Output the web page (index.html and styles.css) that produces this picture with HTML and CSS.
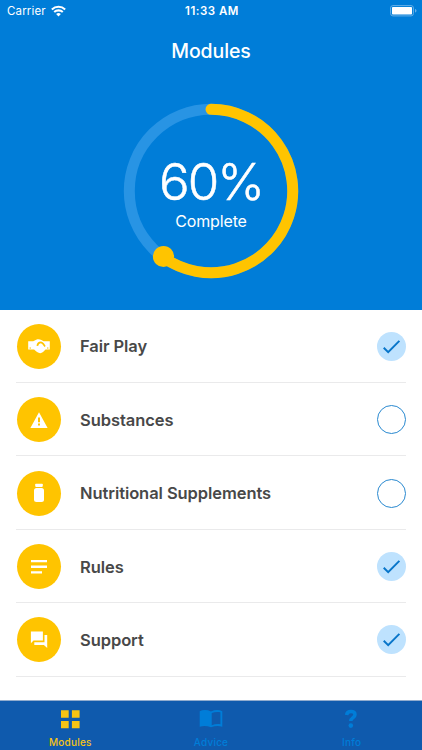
FILE: index.html
```
<!DOCTYPE html>
<html lang="en">

<head>
  <meta charset="UTF-8">
  <meta name="viewport" content="width=device-width, initial-scale=1.0">
  <title>Modules</title>
  <link rel="stylesheet" href="styles.css">
</head>

<body>

  <header>
    <div class="status-bar">
      <div class="carrier">
        <span>Carrier</span>
        <svg class="wifi" viewBox="0 0 14 11">
          <path d="M0.8 4.1a9 9 0 0 1 12.4 0M3 6.5a5.8 5.8 0 0 1 8 0" fill="none" stroke="#fff" stroke-width="1.9"/>
          <path d="M4.8 8.3a3.2 3.2 0 0 1 4.4 0L7 10.6z" fill="#fff"/>
        </svg>
      </div>
      <span class="time">11:33 AM</span>
      <svg class="battery" viewBox="0 0 27 12">
        <rect x="0.6" y="0.6" width="22.8" height="10.3" rx="2.3" fill="none" stroke="#66b0e8" stroke-width="1"/>
        <rect x="2" y="2" width="20" height="7.5" rx="0.8" fill="#fff"/>
        <path d="M25 4v3.6c1-.3 1.5-1 1.5-1.8S26 4.3 25 4z" fill="#66b0e8"/>
      </svg>
    </div>

    <h1>Modules</h1>

    <div class="progress">
      <svg viewBox="0 0 176 176">
        <circle class="track" cx="88" cy="88" r="81.7"/>
        <path class="value" d="M88 6.3a81.7 81.7 0 1 1-48 147.8"/>
        <circle class="knob" cx="40.5" cy="153.5" r="10.6"/>
      </svg>
      <div class="progress-text">
        <span class="percent">60%</span>
        <span class="label">Complete</span>
      </div>
    </div>
  </header>

  <ul class="modules">
    <li>
      <span class="icon">
        <svg viewBox="0 0 24 24">
          <path d="M1.2 7.200h5l3-1.500c1.800-.6 3.600-.4 5.200.3l2.200 1.200h6.200v8.400h-4.300c-1.500 1.500-3.300 3.600-5.200 3.700-1.900.1-4.500-2-6.200-3.700H1.200z"/>
          <path class="cut" d="M10.300 11.800c.4-2.200 1.800-3.500 3.500-3.500 2 0 2.700 1.700 4.200 4.200"/>
          <path class="cut thin" d="M3.200 13.300v1.500M20.800 13.300v1.500"/>
        </svg>
      </span>
      <span class="name">Fair Play</span>
      <span class="check done"><svg viewBox="0 0 28 28"><path d="M6.5 15.2l4.300 4.200L21.600 8.600"/></svg></span>
    </li>
    <li>
      <span class="icon">
        <svg viewBox="0 0 24 24"><path fill-rule="evenodd" d="M3.4 20h17.200L12 4.200zM11 9.500h2v4.700h-2zm0 6h2v2h-2z"/></svg>
      </span>
      <span class="name">Substances</span>
      <span class="check"></span>
    </li>
    <li>
      <span class="icon">
        <svg viewBox="0 0 24 24">
          <rect x="8.2" y="2.8" width="7.6" height="3.1" rx=".8"/>
          <rect x="7" y="6.9" width="10" height="14" rx="2.5"/>
        </svg>
      </span>
      <span class="name">Nutritional Supplements</span>
      <span class="check"></span>
    </li>
    <li>
      <span class="icon">
        <svg viewBox="0 0 24 24"><path d="M4 4.900h16v2.300H4zM4 10.600h16v2.300H4zM4 16.200h11v2.300H4z"/></svg>
      </span>
      <span class="name">Rules</span>
      <span class="check done"><svg viewBox="0 0 28 28"><path d="M6.5 15.2l4.300 4.200L21.600 8.600"/></svg></span>
    </li>
    <li>
      <span class="icon">
        <svg viewBox="0 0 24 24"><path d="M3.900 3.500h12v9H6.500l-2.600 2.800zM17.500 7h2.700v13l-3.300-3H7.300v-2.700h10.200z"/></svg>
      </span>
      <span class="name">Support</span>
      <span class="check done"><svg viewBox="0 0 28 28"><path d="M6.5 15.2l4.300 4.200L21.600 8.600"/></svg></span>
    </li>
  </ul>

  <nav>
    <a class="tab active">
      <svg viewBox="0 0 24 22"><path d="M3 2.300h7.700v7.400H3zM13.900 2.300h7.700v7.400h-7.700zM3 12.900h7.700v7.400H3zM13.900 12.900h7.700v7.400h-7.700z"/></svg>
      <span>Modules</span>
    </a>
    <a class="tab">
      <svg viewBox="0 0 24 22"><path fill-rule="evenodd" d="M.7 3.200C4 1.500 8 1.500 12 3.400c4-1.900 8-1.900 11.300-.2v15.500c-3.500-1.300-7.600-1-11.300.6-3.700-1.600-7.800-1.900-11.300-.6zM12.700 5v12.200c2.800-1.100 5.700-1.500 8.700-1V4.300c-3-.7-5.900-.4-8.700.7z"/></svg>
      <span>Advice</span>
    </a>
    <a class="tab">
      <svg viewBox="0 0 24 22"><path class="question" d="M6.600 7c.3-2.200 2-3.400 4.300-3.400 2.500 0 4.100 1.200 4.100 3.200 0 2.900-4.200 2.800-4.200 6.300"/><circle cx="10.8" cy="17.600" r="2.300"/></svg>
      <span>Info</span>
    </a>
  </nav>

</body>

</html>
```
FILE: styles.css
```
:root {
  --blue: #007dd8;
  --dark-blue: #0f5aad;
  --yellow: #ffc400;
  --light-blue: #bee2fe;
  --text: #484848;
  --line: #eaeaeb;
}

* {
  margin: 0;
  padding: 0;
  box-sizing: border-box;
}

body {
  height: 750px;
  display: flex;
  flex-direction: column;
  background-color: #fff;
  font-family: Inter, sans-serif;
  overflow: hidden;
}

svg {
  display: block;
}

header {
  height: 309.7px;
  flex-shrink: 0;
  display: flex;
  flex-direction: column;
  align-items: center;
  background-color: var(--blue);
  color: #fff;
}

.status-bar {
  width: 100%;
  height: 22px;
  padding: 0 5px 0 7px;
  display: grid;
  grid-template-columns: 1fr auto 1fr;
  align-items: center;
  font-size: 11.5px;
}

.carrier {
  display: flex;
  align-items: center;
  gap: 5px;
  letter-spacing: 0.15px;
}

.wifi {
  width: 15px;
  height: 12px;
}

.time {
  font-weight: 600;
  letter-spacing: 0.5px;
}

.battery {
  width: 27px;
  height: 12px;
  justify-self: end;
}

h1 {
  height: 58px;
  line-height: 59px;
  font-size: 19.5px;
  font-weight: 500;
  letter-spacing: -0.1px;
}

.progress {
  width: 176px;
  height: 176px;
  margin-top: 22.5px;
  display: grid;
}

.progress > * {
  grid-area: 1 / 1;
}

.track,
.value {
  fill: none;
  stroke-width: 11;
}

.track {
  stroke: #2894e4;
}

.value {
  stroke: var(--yellow);
  stroke-linecap: round;
}

.knob {
  fill: var(--yellow);
}

.progress-text {
  display: flex;
  flex-direction: column;
  align-items: center;
  padding-top: 49px;
}

.percent {
  font-size: 51px;
  line-height: 60px;
  font-weight: 300;
  letter-spacing: -2px;
  -webkit-text-stroke: 0.5px #fff;
}

.label {
  font-size: 16px;
  line-height: 18px;
  letter-spacing: -0.15px;
}

.modules {
  flex: 1;
  padding: 0 16px;
  list-style: none;
}

.modules li {
  height: 73.4px;
  display: flex;
  align-items: center;
  padding-top: 1px;
  border-bottom: 1px solid var(--line);
}

.icon {
  width: 44px;
  height: 45px;
  margin-left: 1px;
  display: flex;
  align-items: center;
  justify-content: center;
  border-radius: 50%;
  background-color: var(--yellow);
}

.icon svg {
  width: 24px;
  height: 24px;
  fill: #fff;
}

.icon .cut {
  fill: none;
  stroke: var(--yellow);
  stroke-width: 1.7;
}

.icon .thin {
  stroke-width: 1;
}

.name {
  flex: 1;
  margin-left: 19px;
  font-size: 16.5px;
  font-weight: 600;
  letter-spacing: -0.07px;
  color: var(--text);
}

.check {
  width: 29px;
  height: 29px;
  border: 1px solid #2989d0;
  border-radius: 50%;
}

.check.done {
  border: none;
  background-color: var(--light-blue);
}

.check path {
  fill: none;
  stroke: #0875c9;
  stroke-width: 1.9;
}

nav {
  height: 50.5px;
  flex-shrink: 0;
  display: grid;
  grid-template-columns: repeat(3, 1fr);
  background-color: var(--dark-blue);
  border-top: 1px solid #91acce;
}

.tab {
  display: flex;
  flex-direction: column;
  align-items: center;
  padding-top: 7px;
  color: var(--blue);
  font-size: 10px;
  font-weight: 500;
  line-height: 14px;
  letter-spacing: 0.2px;
}

.tab svg {
  width: 24px;
  height: 22px;
  margin-bottom: 5px;
  fill: currentColor;
}

.tab .question {
  fill: none;
  stroke: currentColor;
  stroke-width: 3.5;
}

.tab.active {
  color: #f7c414;
}
```
